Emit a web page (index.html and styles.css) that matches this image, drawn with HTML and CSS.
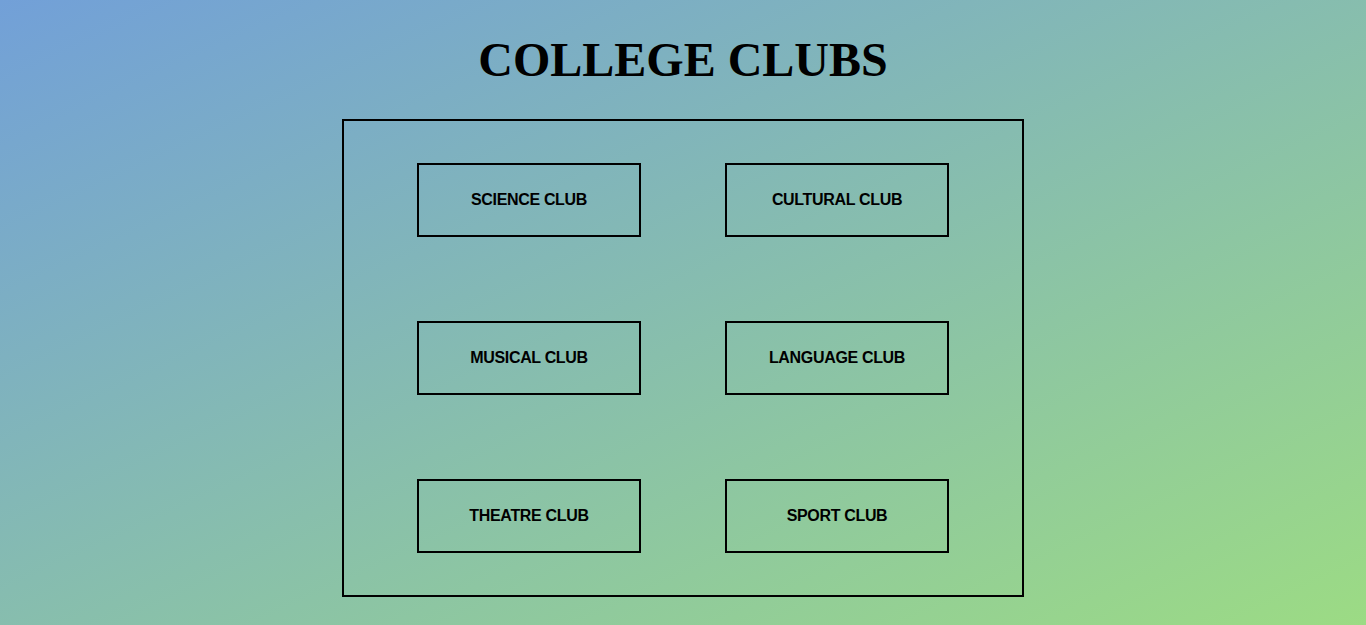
FILE: index.html
```html
<!DOCTYPE html>
<html>
<head>
<meta charset="utf-8">
<link rel="stylesheet" href="styles.css">
</head>
<body>
<h1 class="title">COLLEGE CLUBS</h1>
<div class="panel">
  <div class="club">SCIENCE CLUB</div>
  <div class="club">CULTURAL CLUB</div>
  <div class="club">MUSICAL CLUB</div>
  <div class="club">LANGUAGE CLUB</div>
  <div class="club">THEATRE CLUB</div>
  <div class="club">SPORT CLUB</div>
</div>
</body>
</html>
```
FILE: styles.css
```css
html, body {
  margin: 0;
  padding: 0;
  height: 100%;
}
body {
  background: linear-gradient(to bottom right, #72a0d8, #9cdb84);
  font-family: "Liberation Sans", Arial, sans-serif;
  display: flex;
  flex-direction: column;
  align-items: center;
  overflow: hidden;
}
.title {
  font-family: "Liberation Serif", "Times New Roman", serif;
  font-weight: bold;
  font-size: 48px;
  line-height: 60px;
  margin: 30px 0 29px;
  color: #000;
}
.panel {
  border: 2px solid #000;
  padding: 42px 73px;
  box-sizing: border-box;
  width: 682px;
  display: grid;
  grid-template-columns: 224px 224px;
  grid-auto-rows: 74px;
  column-gap: 84px;
  row-gap: 84px;
}
.club {
  border: 2px solid #000;
  display: flex;
  align-items: center;
  justify-content: center;
  font-weight: bold;
  font-size: 16px;
  letter-spacing: -0.33px;
  padding-bottom: 1px;
  color: #000;
}
```
